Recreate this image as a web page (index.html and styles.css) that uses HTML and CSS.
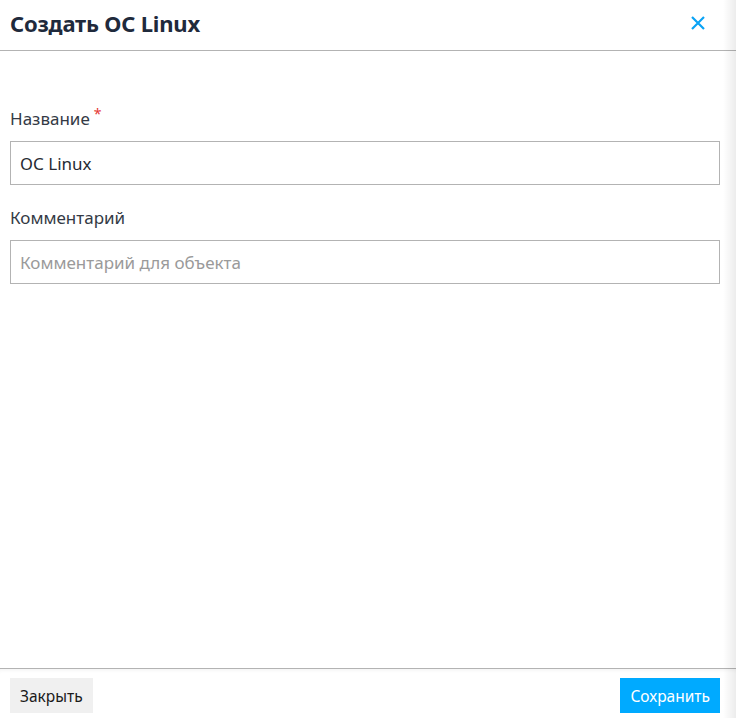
FILE: index.html
```
<!DOCTYPE html>
<html lang="ru">
<head>
<meta charset="utf-8">
<title>Создать ОС Linux</title>
<link rel="stylesheet" href="styles.css">
</head>
<body>
<div class="dialog">
  <header class="dialog-header">
    <h1 class="dialog-title">Создать ОС Linux</h1>
    <button class="close-btn" type="button" aria-label="Закрыть">
      <svg width="14" height="14" viewBox="0 0 14 14"><path d="M1 1L13 13M13 1L1 13" stroke="#0aa3f5" stroke-width="2.2" fill="none"/></svg>
    </button>
  </header>
  <main class="dialog-body">
    <div class="field">
      <label class="field-label">Название<span class="req">*</span></label>
      <input class="field-input" type="text" value="ОС Linux">
    </div>
    <div class="field">
      <label class="field-label">Комментарий</label>
      <input class="field-input" type="text" placeholder="Комментарий для объекта">
    </div>
  </main>
  <footer class="dialog-footer">
    <button class="btn btn-secondary" type="button">Закрыть</button>
    <button class="btn btn-primary" type="button">Сохранить</button>
  </footer>
  <div class="edge-shade"></div>
</div>
</body>
</html>
```

FILE: styles.css
```
html, body {
  margin: 0;
  padding: 0;
  height: 100%;
}
body {
  background: #fff;
  font-family: "Noto Sans", "Open Sans", sans-serif;
  overflow: hidden;
}
.dialog {
  position: relative;
  height: 718px;
  display: flex;
  flex-direction: column;
  background: #fff;
}
.edge-shade {
  position: absolute;
  top: 0;
  right: 0;
  width: 13px;
  height: 100%;
  background: linear-gradient(to right, rgba(0,0,0,0), rgba(0,0,0,0.075));
  pointer-events: none;
}
.dialog-header {
  height: 45px;
  padding: 0 22px 5px 10px;
  border-bottom: 1px solid #b3b3b3;
  display: flex;
  align-items: center;
  justify-content: space-between;
}
.dialog-title {
  margin: 0;
  font-size: 22px;
  font-weight: 700;
  color: #1f2a3c;
  letter-spacing: -0.2px;
}
.close-btn {
  width: 32px;
  height: 32px;
  border: 0;
  padding: 0;
  background: transparent;
  display: flex;
  align-items: center;
  justify-content: center;
}
.dialog-body {
  flex: 1;
  padding: 56px 16px 0 10px;
  display: flex;
  flex-direction: column;
  gap: 21px;
}
.field {
  display: flex;
  flex-direction: column;
  gap: 10px;
}
.field-label {
  font-size: 17px;
  line-height: 24px;
  color: #343a45;
}
.req {
  color: #e53935;
  font-size: 14px;
  vertical-align: top;
  margin-left: 4px;
  line-height: 14px;
}
.field-input {
  box-sizing: border-box;
  height: 44px;
  width: 100%;
  border: 1px solid #b3b3b3;
  border-radius: 0;
  padding: 0 9px;
  font-family: "Noto Sans", "Open Sans", sans-serif;
  font-size: 17px;
  color: #262b33;
  outline: none;
  background: #fff;
}
.field-input::placeholder {
  color: #9a9a9a;
}
.dialog-footer {
  border-top: 1px solid #b3b3b3;
  box-shadow: inset 0 4px 4px -3px rgba(0,0,0,0.06);
  padding: 9px 16px 5px 10px;
  display: flex;
  justify-content: space-between;
}
.btn {
  height: 35px;
  border: 0;
  border-radius: 0;
  padding: 0 10px;
  font-family: "Noto Sans", "Open Sans", sans-serif;
  font-size: 15.5px;
}
.btn-secondary {
  background: #f0f0f0;
  color: #1a1a1a;
}
.btn-primary {
  background: #00aaff;
  color: #fff;
}
```
